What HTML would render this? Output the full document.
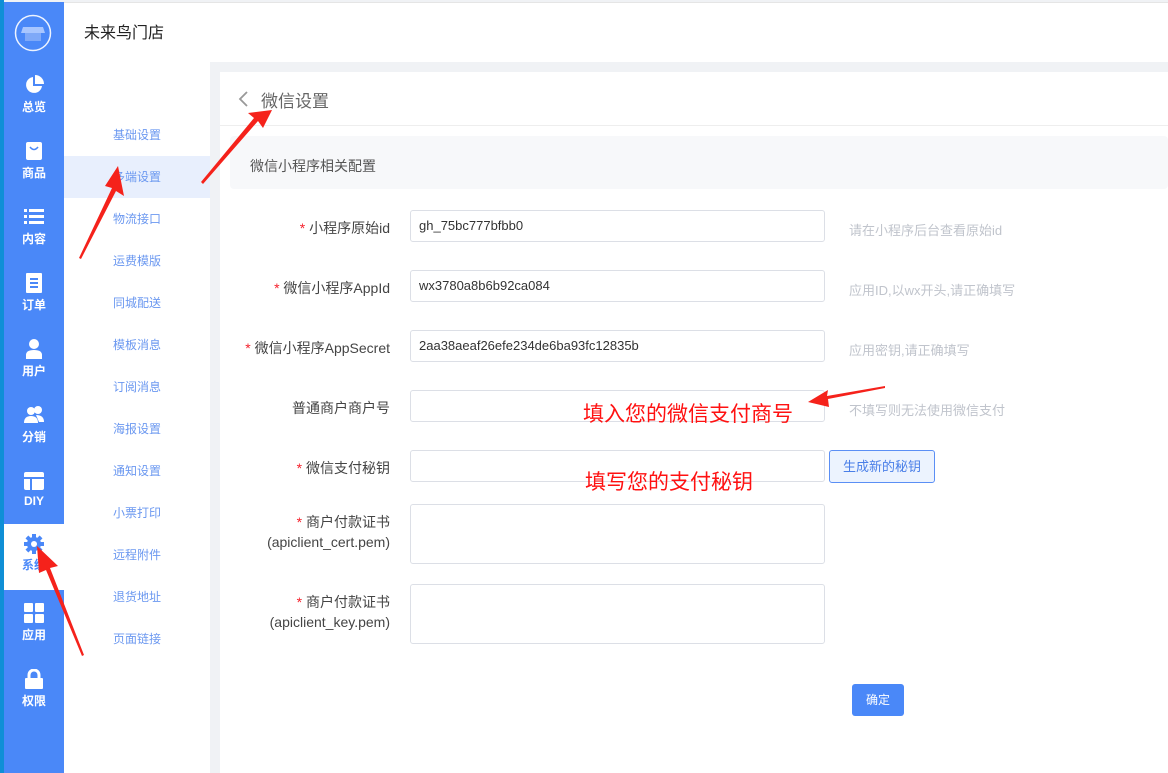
<!DOCTYPE html>
<html><head><meta charset="utf-8"><style>
*{margin:0;padding:0;box-sizing:border-box}
body{width:1168px;height:773px;overflow:hidden;background:#f0f2f5;font-family:"Liberation Sans","Noto Sans CJK SC",sans-serif;position:relative}
.abs{position:absolute}
.strip{left:0;top:0;width:4px;height:773px;background:#0f8fd6}
.side{left:4px;top:2px;width:60px;height:771px;background:#4a88f8}
.mi{position:absolute;left:4px;width:60px;height:66px;color:#fff;font-size:12px;text-align:center;font-weight:bold}
.mi span{position:absolute;left:0;right:0;top:32px}
.mi svg{position:absolute;left:20px;top:9px}
.head{left:64px;top:2px;width:1104px;height:60px;background:#fff;border-top:1px solid #e5e5e5}
.sub{left:64px;top:62px;width:146px;height:711px;background:#fff}
.si{position:absolute;left:0;width:146px;height:42px;line-height:42px;padding-left:49px;font-size:12px;color:#6b98f0}
.main{left:220px;top:72px;width:948px;height:701px;background:#fff}
.lab{position:absolute;right:778px;font-size:14px;color:#444;text-align:right;line-height:20px}
.lab b{color:#f5222d;font-weight:normal}
.inp{position:absolute;left:410px;width:415px;height:32px;border:1px solid #dcdfe6;border-radius:3px;font-size:13px;color:#333;padding-left:8px;line-height:30px;background:#fff}
.tip{position:absolute;left:849px;font-size:13px;color:#c0c4cc}
.red{position:absolute;color:#f11;font-size:21px}
</style></head><body>
<div class="abs strip"></div>
<div class="abs side"></div>
<svg class="abs" style="left:14px;top:14px" width="38" height="38"><circle cx="19" cy="19" r="17.5" fill="none" stroke="#fff" stroke-width="1.5" opacity=".9"/><path d="M9 13h20l2 6H7z" fill="#a8c6ff"/><rect x="11" y="19" width="16" height="8" fill="#7fa9f8"/></svg>
<div class="mi" style="top:66px"><svg width="20" height="20"><path d="M9 2A8 8 0 1 0 18 11H9z" fill="#fff"/><path d="M11 0v9h9A9 9 0 0 0 11 0z" fill="#fff"/></svg><span>总览</span></div>
<div class="mi" style="top:132px"><svg width="20" height="20"><rect x="2" y="1" width="16" height="18" rx="2" fill="#fff"/><path d="M6 6q4 5 8 0" stroke="#4a88f8" stroke-width="1.5" fill="none"/></svg><span>商品</span></div>
<div class="mi" style="top:198px"><svg width="20" height="20"><g fill="#fff"><rect x="0" y="2" width="3" height="3"/><rect x="5" y="2" width="15" height="3"/><rect x="0" y="8" width="3" height="3"/><rect x="5" y="8" width="15" height="3"/><rect x="0" y="14" width="3" height="3"/><rect x="5" y="14" width="15" height="3"/></g></svg><span>内容</span></div>
<div class="mi" style="top:264px"><svg width="20" height="20"><rect x="2" y="0" width="16" height="20" rx="1" fill="#fff"/><g fill="#4a88f8"><rect x="6" y="5" width="8" height="2"/><rect x="6" y="9" width="8" height="2"/><rect x="6" y="13" width="8" height="2"/></g></svg><span>订单</span></div>
<div class="mi" style="top:330px"><svg width="20" height="20"><circle cx="10" cy="5" r="5" fill="#fff"/><path d="M2 20v-4q0-5 8-5t8 5v4z" fill="#fff"/></svg><span>用户</span></div>
<div class="mi" style="top:396px"><svg width="20" height="20"><circle cx="7" cy="6" r="4" fill="#fff"/><circle cx="14" cy="5" r="4" fill="#fff"/><path d="M0 18q0-7 7-7t7 7z" fill="#fff"/><path d="M12 10q8 0 8 7h-5z" fill="#fff"/></svg><span>分销</span></div>
<div class="mi" style="top:462px"><svg width="20" height="20"><rect x="0" y="1" width="20" height="18" rx="2" fill="#fff"/><rect x="0" y="6" width="20" height="2" fill="#4a88f8"/><rect x="6" y="8" width="2" height="11" fill="#4a88f8"/></svg><span>DIY</span></div>
<div class="mi" style="top:524px;background:#fff;color:#4a88f8"><svg width="20" height="22" viewBox="0 0 20 20"><g fill="#4a88f8"><circle cx="10" cy="10" r="7"/><rect x="8" y="0" width="4" height="20"/><rect x="0" y="8" width="20" height="4"/><rect x="8" y="0" width="4" height="20" transform="rotate(45 10 10)"/><rect x="8" y="0" width="4" height="20" transform="rotate(-45 10 10)"/></g><circle cx="10" cy="10" r="3" fill="#fff"/></svg><span>系统</span></div>
<div class="mi" style="top:594px"><svg width="20" height="20"><g fill="#fff"><rect x="0" y="0" width="9" height="9" rx="1"/><rect x="11" y="0" width="9" height="9" rx="1"/><rect x="0" y="11" width="9" height="9" rx="1"/><rect x="11" y="11" width="9" height="9" rx="1"/></g></svg><span>应用</span></div>
<div class="mi" style="top:660px"><svg width="20" height="20"><path d="M5 9V6a5 5 0 0 1 10 0v3" stroke="#fff" stroke-width="3" fill="none"/><rect x="1" y="9" width="18" height="11" rx="1" fill="#fff"/></svg><span>权限</span></div>

<div class="abs head"><div style="position:absolute;left:20px;top:16px;font-size:16px;color:#222">未来鸟门店</div></div>
<div class="abs sub">
<div class="si" style="top:52px">基础设置</div>
<div class="si" style="top:94px;background:#e8effd">多端设置</div>
<div class="si" style="top:136px">物流接口</div>
<div class="si" style="top:178px">运费模版</div>
<div class="si" style="top:220px">同城配送</div>
<div class="si" style="top:262px">模板消息</div>
<div class="si" style="top:304px">订阅消息</div>
<div class="si" style="top:346px">海报设置</div>
<div class="si" style="top:388px">通知设置</div>
<div class="si" style="top:430px">小票打印</div>
<div class="si" style="top:472px">远程附件</div>
<div class="si" style="top:514px">退货地址</div>
<div class="si" style="top:556px">页面链接</div>
</div>
<div class="abs main">
<div style="position:absolute;left:0;top:0;width:948px;height:54px;border-bottom:1px solid #eee"></div>
<svg style="position:absolute;left:17px;top:18px" width="12" height="18"><path d="M10 2L3 9l7 7" stroke="#999" stroke-width="1.8" fill="none"/></svg>
<div style="position:absolute;left:41px;top:15px;font-size:17px;color:#666">微信设置</div>
<div style="position:absolute;left:10px;top:64px;width:938px;height:53px;background:#f7f8fa;border-radius:4px"></div>
<div style="position:absolute;left:30px;top:84px;font-size:14px;color:#555">微信小程序相关配置</div>
</div>
<div class="lab" style="top:218px"><b>*</b> 小程序原始id</div>
<div class="inp" style="top:210px">gh_75bc777bfbb0</div>
<div class="tip" style="top:220px">请在小程序后台查看原始id</div>
<div class="lab" style="top:278px"><b>*</b> 微信小程序AppId</div>
<div class="inp" style="top:270px">wx3780a8b6b92ca084</div>
<div class="tip" style="top:280px">应用ID,以wx开头,请正确填写</div>
<div class="lab" style="top:338px"><b>*</b> 微信小程序AppSecret</div>
<div class="inp" style="top:330px">2aa38aeaf26efe234de6ba93fc12835b</div>
<div class="tip" style="top:340px">应用密钥,请正确填写</div>
<div class="lab" style="top:398px">普通商户商户号</div>
<div class="inp" style="top:390px"></div>
<div class="tip" style="top:400px">不填写则无法使用微信支付</div>
<div class="lab" style="top:458px"><b>*</b> 微信支付秘钥</div>
<div class="inp" style="top:450px"></div>
<div style="position:absolute;left:829px;top:450px;width:106px;height:33px;border:1px solid #5b8ff5;background:#ecf3fe;border-radius:3px;color:#4a7fe8;font-size:13px;text-align:center;line-height:31px">生成新的秘钥</div>
<div class="lab" style="top:512px"><b>*</b> 商户付款证书<br>(apiclient_cert.pem)</div>
<div class="inp" style="top:504px;height:60px"></div>
<div class="lab" style="top:592px"><b>*</b> 商户付款证书<br>(apiclient_key.pem)</div>
<div class="inp" style="top:584px;height:60px"></div>
<div style="position:absolute;left:852px;top:684px;width:52px;height:32px;background:#4a88f8;border-radius:3px;color:#fff;font-size:12px;text-align:center;line-height:32px">确定</div>
<div class="red" style="left:583px;top:398px">填入您的微信支付商号</div>
<div class="red" style="left:585px;top:466px">填写您的支付秘钥</div>
<svg class="abs" style="left:0;top:0" width="1168" height="773">
<g fill="#f5221b">
<polygon points="118,166 124,196 116,191 81,259 79,258 112,188 105,186"/>
<polygon points="272,110 263,128 258,121 203,184 201,182 254,118 248,113"/>
<polygon points="37,546 58,566 50,568 84,655 82,656 46,570 39,573"/>
<polygon points="808,402 828,390 827,396 885,386 885,388 828,399 829,407"/>
</g></svg>
</body></html>
